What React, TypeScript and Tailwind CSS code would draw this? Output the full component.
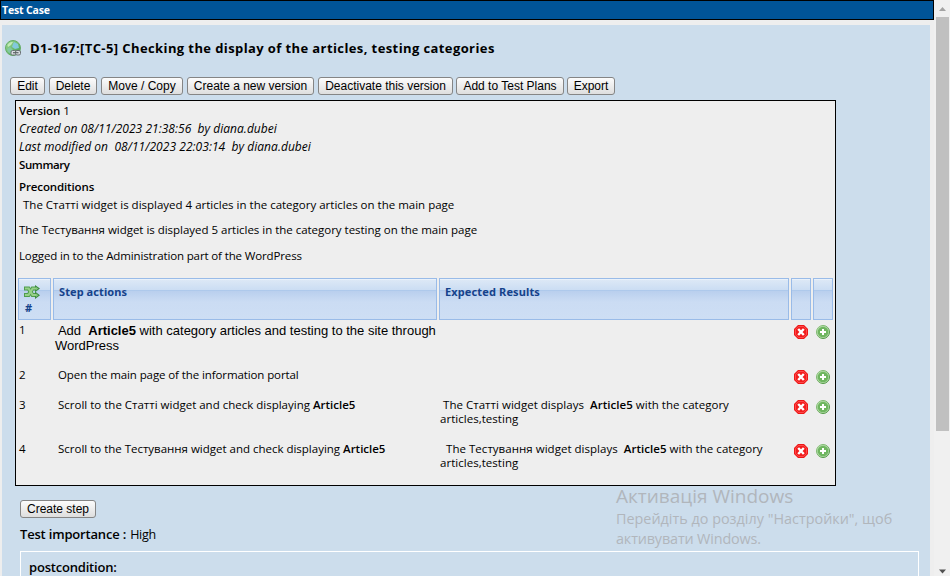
import type { ReactNode } from "react";

const arial = "font-['Liberation_Sans',sans-serif]";

function ToolButton({ className, children }: { className: string; children: ReactNode }) {
  return (
    <button
      className={`${arial} ${className} h-[18px] shrink-0 whitespace-nowrap rounded-[3px] border border-[#858585] bg-linear-to-b from-[#fcfcfc] to-[#dedede] p-0 text-center leading-[16px] text-black`}
    >
      {children}
    </button>
  );
}

function Line({ className, children }: { className: string; children: ReactNode }) {
  return <div className={`h-[18px] whitespace-pre leading-[18px] ${className}`}>{children}</div>;
}

function HeadCell({ className = "", children }: { className?: string; children?: ReactNode }) {
  return (
    <div
      className={`h-[42px] border border-[#99bbe8] bg-[linear-gradient(to_bottom,#f6faff_0px,#dce8f6_1px,#cbddf3_11px,#a3c3e9_11px,#b9cfee_12px,#cbdcf3_23px,#cddef4_100%)] font-['Noto_Sans',sans-serif] text-[11px] font-bold text-[#15428b] ${className}`}
    >
      {children}
    </div>
  );
}

function DeleteIcon() {
  return (
    <svg className="block h-[14px] w-[14px]" viewBox="0 0 14 14">
      <path d="M4 0h6l4 4v6l-4 4H4l-4-4V4z" fill="#ee1111" />
      <path d="M4.4 1.4h5.2l3 3v5.2l-3 3H4.4l-3-3V4.4z" fill="#f21d1d" stroke="#ff6060" strokeWidth=".8" />
      <path d="M4.2 4l5.6 6M9.8 4l-5.6 6" stroke="#fff" strokeWidth="2.4" />
    </svg>
  );
}

function AddIcon() {
  return (
    <svg className="block h-[14px] w-[14px]" viewBox="0 0 14 14">
      <defs>
        <linearGradient id="add" x1="0" y1="0" x2="1" y2="1">
          <stop offset="0" stopColor="#96c986" />
          <stop offset="1" stopColor="#3b8a30" />
        </linearGradient>
      </defs>
      <circle cx="7" cy="7" r="6.5" fill="#b5dcab" stroke="url(#add)" />
      <circle cx="7" cy="7" r="5.3" fill="#6fb660" />
      <path d="M7 4v6M4 7h6" stroke="#fff" strokeWidth="2" />
    </svg>
  );
}

function GlobeLinkIcon() {
  return (
    <svg className="block h-4 w-4" viewBox="0 0 16 16">
      <defs>
        <linearGradient id="globe" x1="0" y1="0" x2="1" y2="1">
          <stop offset="0" stopColor="#a5dc97" />
          <stop offset="1" stopColor="#3a9a4a" />
        </linearGradient>
      </defs>
      <circle cx="8" cy="8" r="7.5" fill="url(#globe)" stroke="#65ae66" />
      <path d="M9 2l4 2 1 4-4 1-3-2 1-3z" fill="#82c9dc" />
      <path d="M2 9l3-2 3 3-2 4-3-2z" fill="#82c9a2" />
      <path d="M2.5 5C4 2.5 6 2 8 2L6 5 3 7z" fill="#c3ebb8" />
      <rect x="6" y="10.5" width="5" height="4.5" rx="1.5" fill="#d9dde0" stroke="#6b7074" />
      <rect x="10.5" y="10.5" width="5" height="4.5" rx="1.5" fill="#d9dde0" stroke="#6b7074" />
      <path d="M8 12.7h5.5" stroke="#5d6266" strokeWidth="1.2" />
    </svg>
  );
}

function ShuffleIcon() {
  return (
    <svg className="block h-[14px] w-[16px]" viewBox="0 0 16 14">
      <g fill="none" stroke="#4f9d4c" strokeWidth="4">
        <path d="M0 3.5h4.5l4 6.5H12" />
        <path d="M0 10h4.5l4-6.5H12" />
      </g>
      <path d="M11 0l5 3.5L11 7.2zM11 6.5l5 3.7-5 3.8z" fill="#3d8c3f" />
      <g fill="none" stroke="#96d088" strokeWidth="2.2">
        <path d="M1 3.5h3.6l4 6.5H12" />
        <path d="M1 10h3.6l4-6.5H12" />
      </g>
      <path d="M12 2l2.3 1.6L12 5.2zM12 8.5l2.3 1.7-2.3 1.8z" fill="#86c67b" />
    </svg>
  );
}

function StepRow({ n, height, action, expected }: { n: number; height: string; action: ReactNode; expected?: ReactNode }) {
  return (
    <div className={`grid grid-cols-[33px_384px_350px_20px_20px] gap-x-[2px] whitespace-pre leading-[14px] ${height}`}>
      <div className="pl-[1px] pt-px">{n}</div>
      <div className="pl-[1px] pt-px">{action}</div>
      <div className="pl-[1px] pt-px">{expected}</div>
      <div className="pl-[3px] pt-[3px]"><DeleteIcon /></div>
      <div className="pl-[3px] pt-[3px]"><AddIcon /></div>
    </div>
  );
}

export default function App() {
  return (
    <div className="relative flex h-[576px] w-[950px] overflow-hidden bg-[#eeeeee] font-['Open_Sans',sans-serif] text-[11.5px] text-black">
      <main className="w-[934px] shrink-0">
        <h1 className="h-5 border border-black bg-[#005498] pl-px text-[10.5px] font-bold leading-[18px] tracking-[-0.15px] text-white">Test Case</h1>

        <div className="ml-[2px] mt-[5px] h-[551px] w-[928px] overflow-hidden bg-[#ccddec]">
          <div className="flex h-[52px] items-center gap-[9px] pb-[6px] pl-[3px]">
            <GlobeLinkIcon />
            <h2 className="whitespace-nowrap pt-px text-[13px] font-bold tracking-[0.4px]">
              D1-167:[TC-5] Checking the display of the articles, testing categories
            </h2>
          </div>

          <div className="flex pl-2 text-[12px]">
            <ToolButton className="mr-1 w-[35px]">Edit</ToolButton>
            <ToolButton className="mr-1 w-[48px]">Delete</ToolButton>
            <ToolButton className="mr-1 w-[82px]">Move / Copy</ToolButton>
            <ToolButton className="mr-1 w-[127px]">Create a new version</ToolButton>
            <ToolButton className="mr-[3px] w-[135px]">Deactivate this version</ToolButton>
            <ToolButton className="mr-[3px] w-[108px]">Add to Test Plans</ToolButton>
            <ToolButton className="w-[48px]">Export</ToolButton>
          </div>

          <section className="ml-[13px] mt-[5px] h-[386px] w-[821px] border border-black bg-[#eeeeee] px-[2px]">
            <div className="h-[177px] pl-px pt-px">
              <Line className=""><span className="font-semibold tracking-[-0.1px]">Version</span> 1</Line>
              <Line className="text-[12px] italic tracking-[0.03px]">Created on 08/11/2023 21:38:56  by diana.dubei</Line>
              <Line className="text-[12px] italic tracking-[0.04px]">Last modified on  08/11/2023 22:03:14  by diana.dubei</Line>
              <Line className="font-semibold tracking-[-0.4px]">Summary</Line>
              <Line className="mt-1 font-semibold tracking-[-0.12px]">Preconditions</Line>
              <Line className="pl-[4px]">The Статті widget is displayed 4 articles in the category articles on the main page</Line>
              <Line className="mt-[7px] tracking-[-0.02px]">The Тестування widget is displayed 5 articles in the category testing on the main page</Line>
              <Line className="mt-[8px] tracking-[-0.13px]">Logged in to the Administration part of the WordPress</Line>
            </div>

            <div className="grid grid-cols-[33px_384px_350px_20px_20px] gap-x-[2px]">
              <HeadCell className="pl-[5px] pt-[6px]">
                <ShuffleIcon />
                <div className="pl-px leading-[18px]">#</div>
              </HeadCell>
              <HeadCell className="pl-[5px] pt-[4px] leading-[18px] tracking-[0.08px]">Step actions</HeadCell>
              <HeadCell className="pl-[5px] pt-[4px] leading-[18px] tracking-[0.13px]">Expected Results</HeadCell>
              <HeadCell />
              <HeadCell />
            </div>

            <div className="pt-[2px]">
              <StepRow
                n={1}
                height="h-[45px]"
                action={
                  <div className={`${arial} pl-px text-[13px] leading-[15px]`}>
                    {" Add  "}<b>Article5</b>{" with category articles and testing to the site through\nWordPress"}
                  </div>
                }
              />
              <StepRow
                n={2}
                height="h-[30px]"
                action={<div className="pl-[4px] tracking-[-0.1px]">Open the main page of the information portal</div>}
              />
              <StepRow
                n={3}
                height="h-[44px]"
                action={<div className="pl-[4px]">{"Scroll to the Статті widget and check displaying "}<b className="font-semibold">Article5</b></div>}
                expected={<div className="tracking-[0.03px]">{" The Статті widget displays  "}<b className="font-semibold">Article5</b>{" with the category\narticles,testing"}</div>}
              />
              <StepRow
                n={4}
                height="h-[44px]"
                action={<div className="pl-[4px] tracking-[-0.01px]">{"Scroll to the Тестування widget and check displaying "}<b className="font-semibold">Article5</b></div>}
                expected={<div className="tracking-[0.03px]">{"  The Тестування widget displays  "}<b className="font-semibold">Article5</b>{" with the category\narticles,testing"}</div>}
              />
            </div>
          </section>

          <div className="ml-[18px] mt-[14px] flex text-[12px]">
            <ToolButton className="w-[76px]">Create step</ToolButton>
          </div>
          <div className="ml-[18px] mt-[7px] whitespace-pre text-[13px] leading-[18px]">
            <span className="font-semibold tracking-[-0.18px]">Test importance :</span><span className="ml-[4px] text-[12.5px] tracking-[-0.3px]">High</span>
          </div>
          <div className="ml-[18px] mt-[7px] h-[60px] w-[899px] border border-white pl-[8px] pt-[6px] text-[13px] font-semibold leading-[18px] tracking-[-0.2px]">
            postcondition:
          </div>
        </div>
      </main>

      <aside className="flex w-4 shrink-0 flex-col items-center bg-[#f0f0f0]">
        <svg className="h-[17px] w-[7px] shrink-0" viewBox="0 0 7 17"><path d="M0 11L3.5 7 7 11z" fill="#a3a3a3" /></svg>
        <div className="ml-px h-[414px] w-[13px] shrink-0 bg-[#c0c0c0]" />
        <svg className="mt-auto h-[8px] w-[7px] shrink-0" viewBox="0 0 7 8"><path d="M0 1.5h7L3.5 5.5z" fill="#505050" /></svg>
      </aside>

      <div className="pointer-events-none absolute left-[616px] top-[484px] whitespace-nowrap text-[14.4px] leading-[20px] text-[#b1b6bc]">
        <div className="text-[19px] leading-[25px]">Активація Windows</div>
        <div>Перейдіть до розділу "Настройки", щоб</div>
        <div className="tracking-[-0.15px]">активувати Windows.</div>
      </div>
    </div>
  );
}
